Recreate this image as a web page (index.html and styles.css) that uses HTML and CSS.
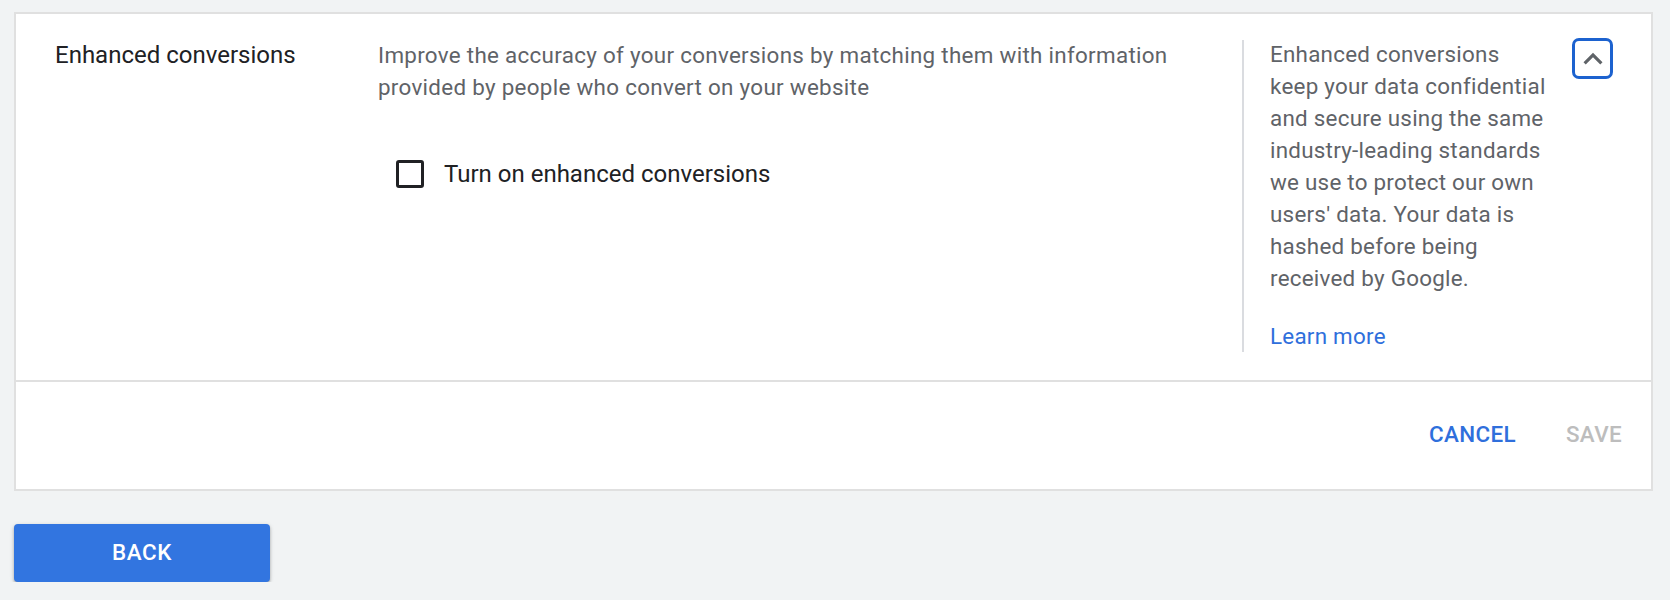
FILE: index.html
```html
<!DOCTYPE html>
<html lang="en">
<head>
<meta charset="utf-8">
<title>Enhanced conversions</title>
<link rel="stylesheet" href="styles.css">
</head>
<body>
<div class="page">
  <section class="card">
    <div class="row">
      <div class="title">Enhanced conversions</div>
      <div class="main">
        <p class="desc">Improve the accuracy of your conversions by matching them with information provided by people who convert on your website</p>
        <label class="check">
          <span class="check-area"><span class="box"></span></span>
          <span class="check-label">Turn on enhanced conversions</span>
        </label>
      </div>
      <aside class="aside">
        <p class="help">Enhanced conversions keep your data confidential and secure using the same industry-leading standards we use to protect our own users' data. Your data is hashed before being received by Google.</p>
        <a class="learn" href="#">Learn more</a>
      </aside>
      <button class="toggle" aria-label="Collapse">
        <svg viewBox="0 0 24 24" width="38" height="38"><path d="M12 8l-6 6 1.41 1.41L12 10.83l4.59 4.58L18 14z" fill="#5f6368"/></svg>
      </button>
    </div>
    <div class="footer">
      <button class="text-btn cancel">CANCEL</button>
      <button class="text-btn save">SAVE</button>
    </div>
  </section>
  <button class="back">BACK</button>
</div>
</body>
</html>
```
FILE: styles.css
```css
html, body {
  margin: 0;
  padding: 0;
  background: #f1f3f4;
  font-family: Roboto, "Liberation Sans", Arial, sans-serif;
}
.page {
  padding: 12px 17px 0 14px;
}
.card {
  background: #fff;
  border: 2px solid #e0e0e0;
}
.row {
  display: flex;
  align-items: flex-start;
  padding: 24px 38px 28px 0;
}
.title {
  width: 362px;
  padding: 1px 0 0 39px;
  box-sizing: border-box;
  flex: none;
  font-size: 24px;
  line-height: 32px;
  color: #202124;
}
.main {
  flex: 1;
  padding-top: 1px;
  padding-right: 40px;
}
.desc {
  margin: 0;
  font-size: 22.4px;
  line-height: 32px;
  letter-spacing: 0.3px;
  color: #5f6368;
}
.check {
  display: flex;
  align-items: center;
  margin-top: 39px;
  cursor: pointer;
}
.check-area {
  width: 64px;
  height: 64px;
  display: flex;
  align-items: center;
  justify-content: center;
  flex: none;
}
.box {
  width: 28px;
  height: 28px;
  box-sizing: border-box;
  border: 3px solid #202124;
  border-radius: 3px;
}
.check-label {
  margin-left: 2px;
  font-size: 24px;
  line-height: 32px;
  color: #202124;
}
.aside {
  flex: none;
  width: 278px;
  margin-top: 2px;
  margin-right: 6px;
  border-left: 2px solid #dadce0;
  padding-left: 26px;
}
.help {
  margin: -2px 0 0;
  font-size: 22.4px;
  line-height: 32px;
  letter-spacing: 0.25px;
  color: #5f6368;
}
.learn {
  display: block;
  margin-top: 26px;
  font-size: 22.4px;
  line-height: 32px;
  letter-spacing: 0.25px;
  color: #2f6fdc;
  text-decoration: none;
}
.toggle {
  flex: none;
  margin-left: 18px;
  width: 41px;
  height: 41px;
  padding: 0;
  box-sizing: border-box;
  border: 3px solid #1c62cf;
  border-radius: 7px;
  background: #fff;
  display: flex;
  align-items: center;
  justify-content: center;
}
.toggle svg {
  display: block;
  flex: none;
}
.footer {
  border-top: 2px solid #e0e0e0;
  height: 103px;
  padding-bottom: 4px;
  display: flex;
  align-items: center;
  justify-content: flex-end;
  padding-right: 6px;
}
.text-btn {
  background: none;
  border: none;
  font-family: inherit;
  font-size: 22.4px;
  font-weight: 500;
  letter-spacing: 0.4px;
  line-height: 32px;
  height: 58px;
  padding: 0 13px;
  min-width: 102px;
}
.cancel {
  color: #2f6fdc;
}
.save {
  color: #bdbdbd;
  margin-left: 14px;
}
.back {
  display: block;
  margin-top: 33px;
  width: 256px;
  height: 58px;
  padding: 0 0 2px;
  border: none;
  border-radius: 4px;
  background: #3275e0;
  color: #fff;
  font-family: inherit;
  font-size: 22.4px;
  font-weight: 500;
  letter-spacing: 0.6px;
  box-shadow: 0 2px 3px rgba(0,0,0,0.25), 0 1px 5px rgba(0,0,0,0.12);
}
```
